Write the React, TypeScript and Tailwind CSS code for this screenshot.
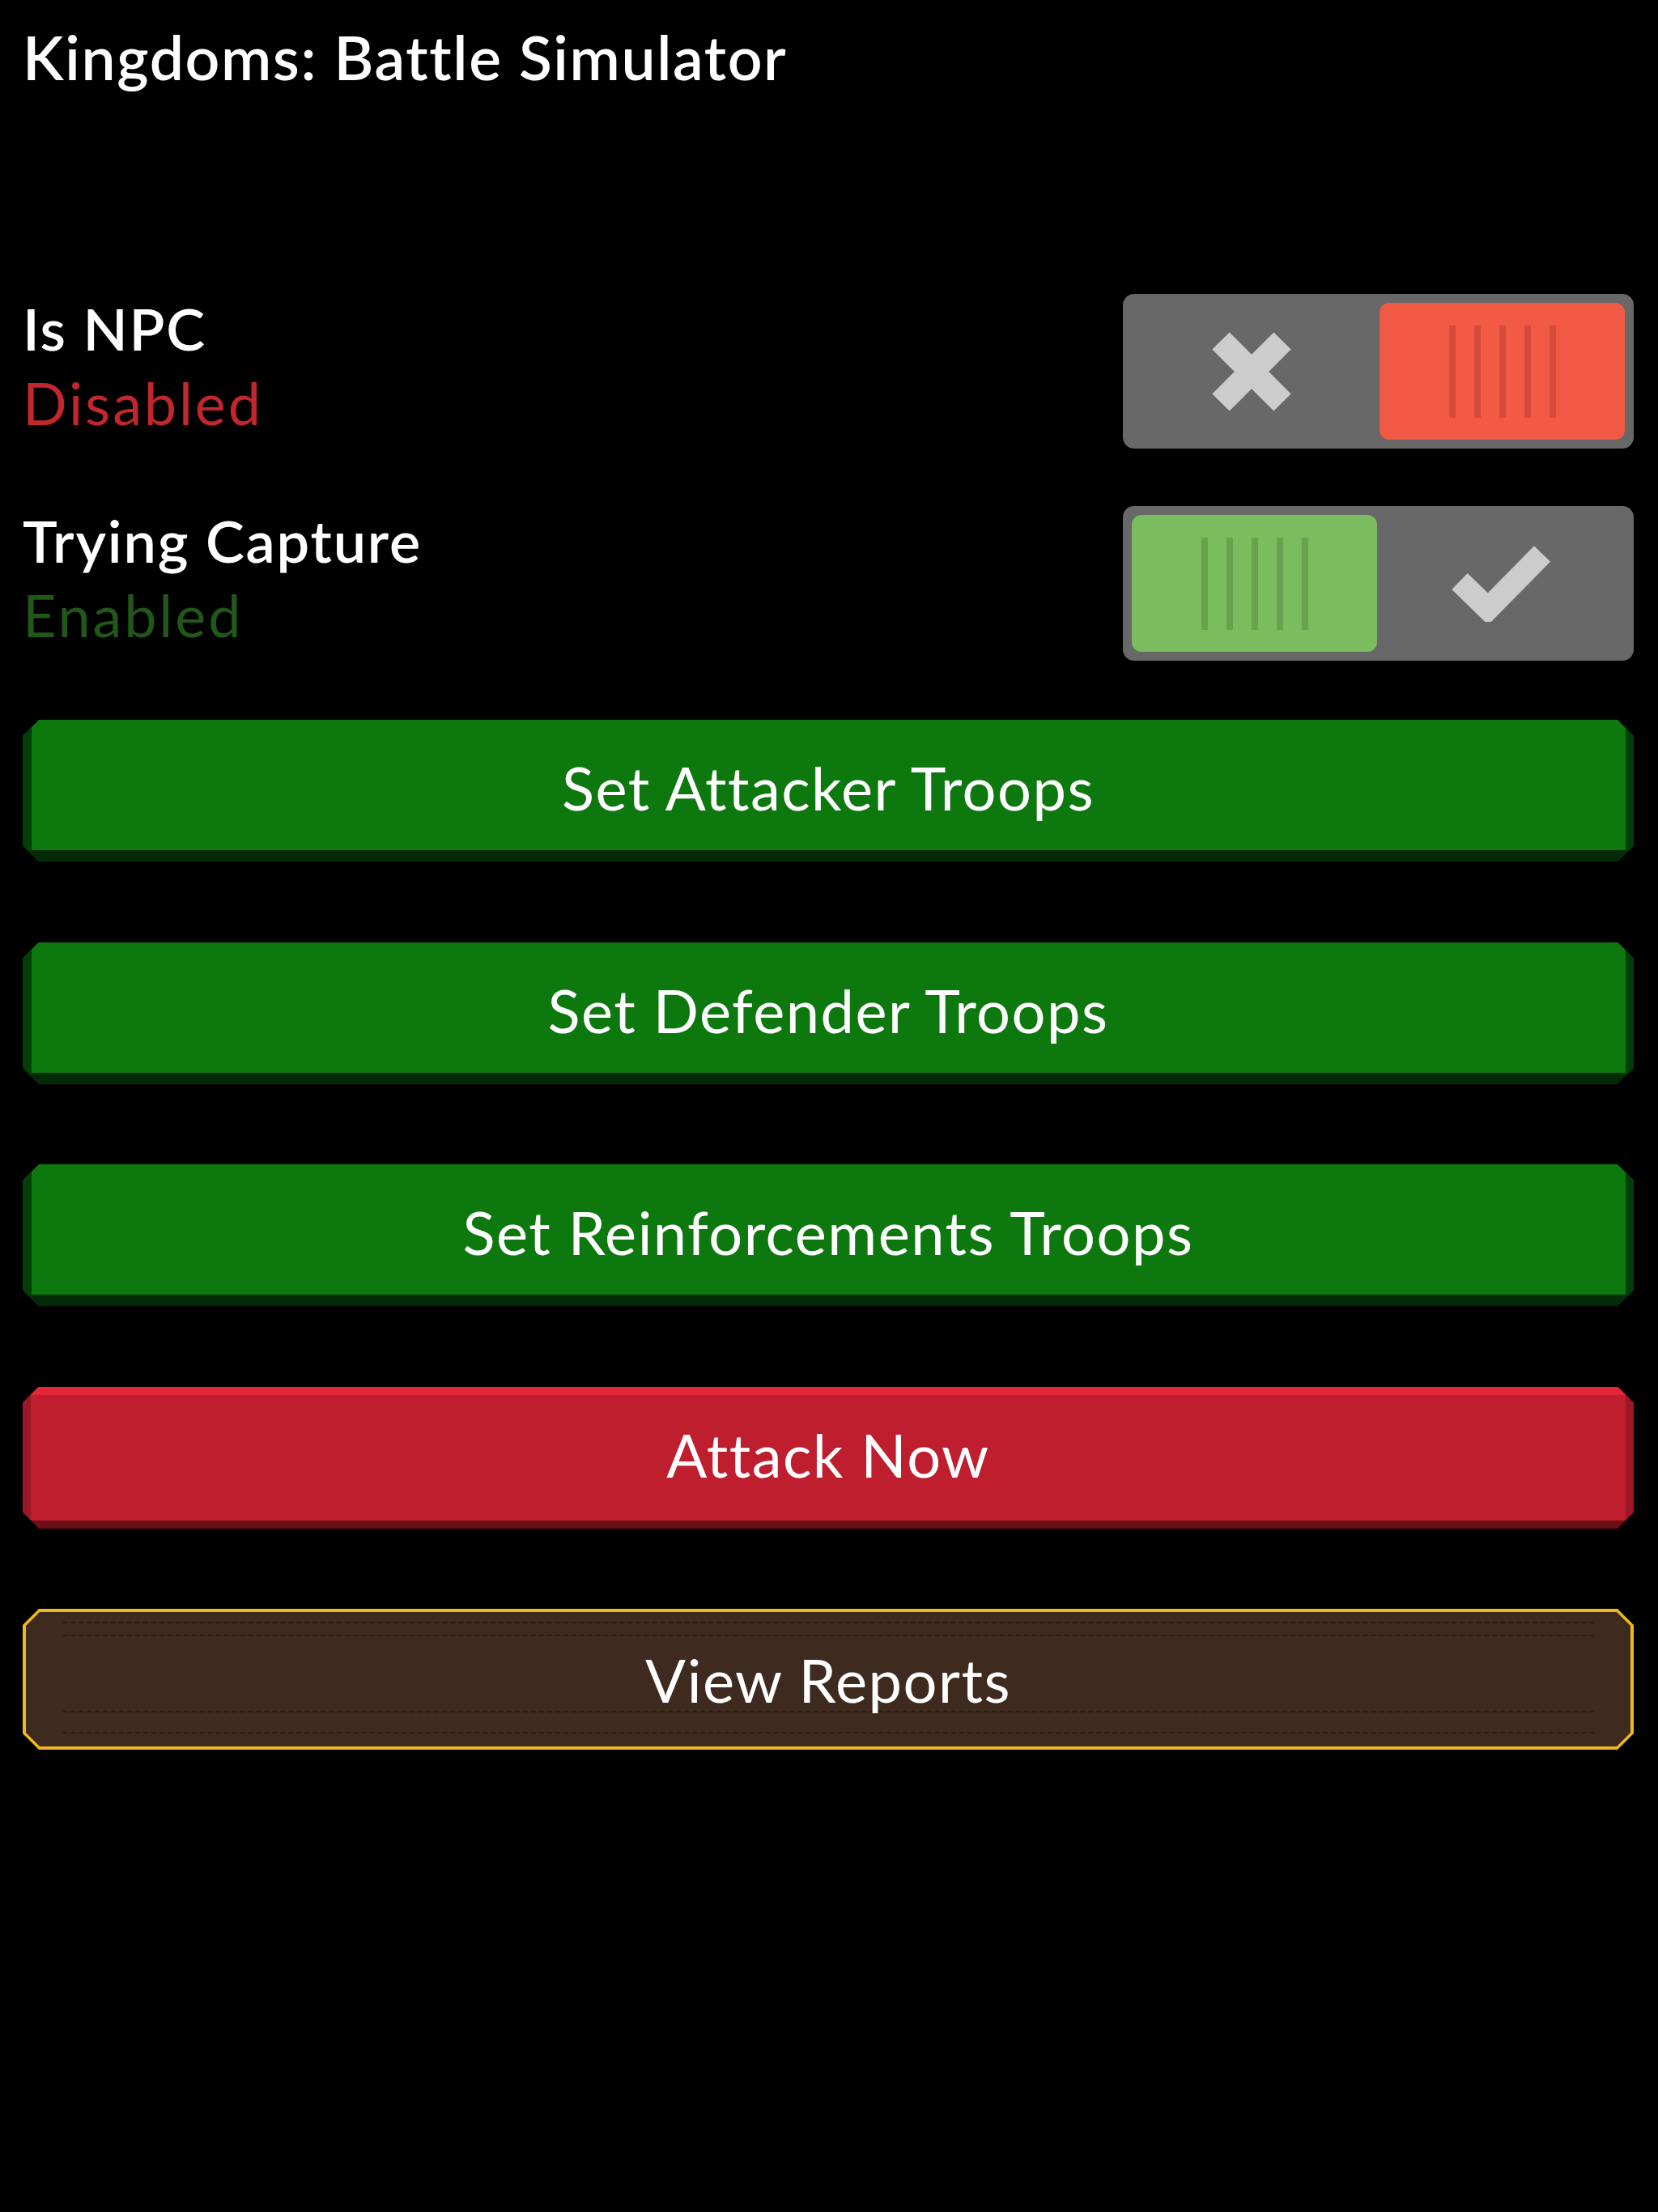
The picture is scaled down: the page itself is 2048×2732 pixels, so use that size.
import React from 'react';

const chamfer20 =
  '[clip-path:polygon(20px_0,calc(100%_-_20px)_0,100%_20px,100%_calc(100%_-_20px),calc(100%_-_20px)_100%,20px_100%,0_calc(100%_-_20px),0_20px)]';

function Stripes({ line }: { line: string }) {
  return (
    <div className="flex gap-[23px]">
      {[0, 1, 2, 3, 4].map((i) => (
        <div key={i} className={`w-[8px] h-[114px] ${line}`} />
      ))}
    </div>
  );
}

function Knob({ on }: { on: boolean }) {
  return (
    <div
      className={`w-[303px] h-full rounded-[12px] flex items-center justify-center ${
        on ? 'bg-[#7bbc5f]' : 'bg-[#f25a45]'
      }`}
    >
      <Stripes line={on ? 'bg-[#68a24f]' : 'bg-[#d64a3a]'} />
    </div>
  );
}

function CrossIcon() {
  return (
    <svg width="104" height="100" viewBox="0 0 104 100">
      <path d="M14 12 L90 88 M90 12 L14 88" stroke="#cccccc" strokeWidth="30" />
    </svg>
  );
}

function CheckIcon() {
  return (
    <svg width="122" height="94" viewBox="0 0 122 94">
      <path d="M10 44 L45 78 L112 10" stroke="#cccccc" strokeWidth="28" fill="none" />
    </svg>
  );
}

function Toggle({ on }: { on: boolean }) {
  return (
    <div className="w-[631px] h-[191px] rounded-[14px] bg-[#686868] p-[11px] flex">
      {on ? (
        <>
          <Knob on />
          <div className="flex-1 flex items-center justify-center">
            <CheckIcon />
          </div>
        </>
      ) : (
        <>
          <div className="flex-1 flex items-center justify-center pr-[10px]">
            <CrossIcon />
          </div>
          <Knob on={false} />
        </>
      )}
    </div>
  );
}

function SettingRow({ label, on }: { label: string; on: boolean }) {
  return (
    <div className="flex items-start justify-between">
      <div className="text-[72px] leading-[92px]">
        <div className="font-semibold text-white tracking-[0.025em]">{label}</div>
        <div className={`tracking-[0.04em] ${on ? 'text-[#22571a]' : 'text-[#c1272d]'}`}>
          {on ? 'Enabled' : 'Disabled'}
        </div>
      </div>
      <div className="mt-[4px]">
        <Toggle on={on} />
      </div>
    </div>
  );
}

function GameButton({ label, variant }: { label: string; variant: 'green' | 'red' }) {
  const styles =
    variant === 'green'
      ? 'bg-[#0c780e] shadow-[inset_11px_0_0_#003f08,inset_-10px_0_0_#003f08,inset_0_-14px_0_#032a06]'
      : 'bg-[#be1e2d] shadow-[inset_0_10px_0_#e62637,inset_10px_0_0_#9c1826,inset_-10px_0_0_#9c1826,inset_0_-10px_0_#6b0f17]';
  return (
    <button
      className={`w-full h-[175px] flex items-center justify-center pb-[8px] text-white text-[74px] tracking-[0.02em] ${chamfer20} ${styles}`}
    >
      {label}
    </button>
  );
}

function ReportsButton() {
  return (
    <button className={`w-full h-[174px] p-[4px] bg-[#f0b81f] ${chamfer20}`}>
      <div
        className={`relative w-full h-full bg-[#3e2a1e] flex items-center justify-center text-white text-[74px] tracking-[0.02em] [clip-path:polygon(17px_0,calc(100%_-_17px)_0,100%_17px,100%_calc(100%_-_17px),calc(100%_-_17px)_100%,17px_100%,0_calc(100%_-_17px),0_17px)]`}
      >
        <div className="absolute left-[45px] right-[45px] top-[12px] h-[18px] border-y-2 border-dashed border-[#2d1f16]" />
        <div className="absolute left-[45px] right-[45px] top-[122px] h-[28px] border-y-2 border-dashed border-[#2d1f16]" />
        <span className="relative">View Reports</span>
      </div>
    </button>
  );
}

export default function App() {
  return (
    <div className="min-h-screen w-full bg-black font-['Lato','Liberation_Sans',sans-serif] pl-[28px] pr-[30px] pt-[29px]">
      <h1 className="text-white font-semibold text-[75px] leading-[82px] tracking-[0.022em]">
        Kingdoms: Battle Simulator
      </h1>

      <div className="mt-[248px] flex flex-col gap-[67px]">
        <SettingRow label="Is NPC" on={false} />
        <SettingRow label="Trying Capture" on />
      </div>

      <div className="mt-[73px] flex flex-col gap-[99.5px]">
        <GameButton label="Set Attacker Troops" variant="green" />
        <GameButton label="Set Defender Troops" variant="green" />
        <GameButton label="Set Reinforcements Troops" variant="green" />
        <GameButton label="Attack Now" variant="red" />
        <ReportsButton />
      </div>
    </div>
  );
}
